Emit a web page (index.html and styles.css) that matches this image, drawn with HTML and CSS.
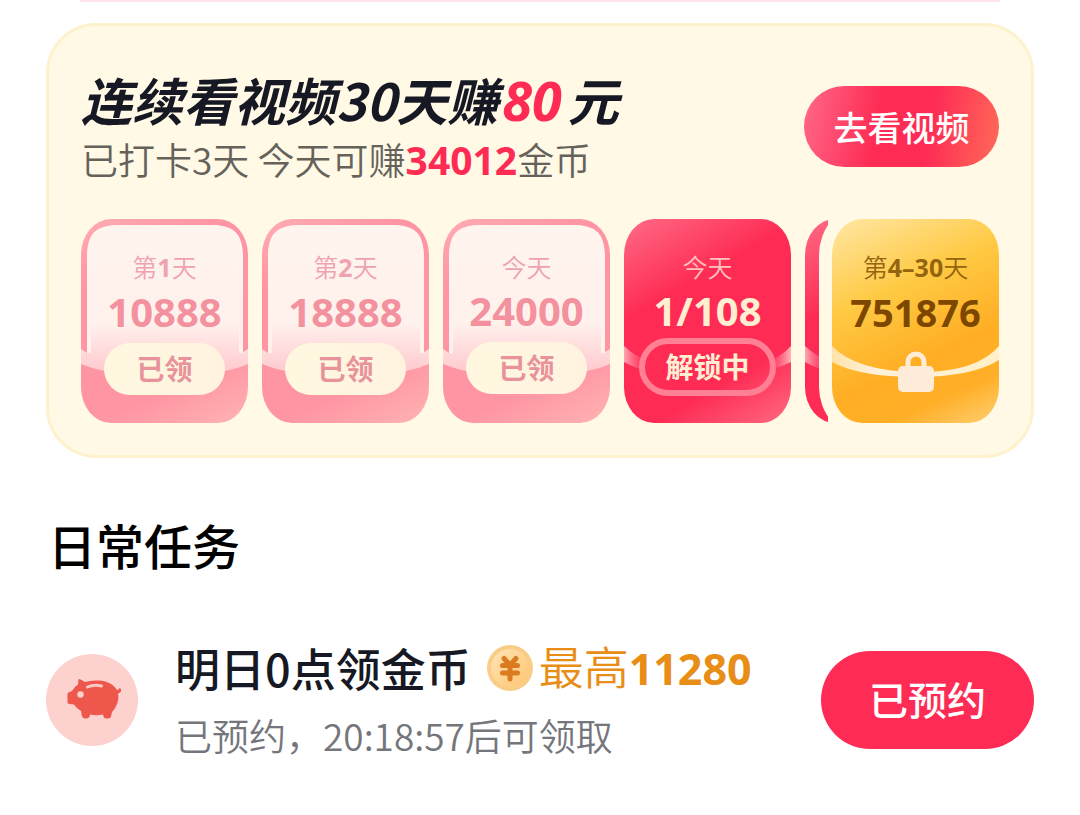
FILE: index.html
```html
<!DOCTYPE html>
<html lang="zh-CN">
<head>
<meta charset="utf-8">
<meta name="viewport" content="width=device-width, initial-scale=1">
<title>任务中心</title>
<link rel="stylesheet" href="styles.css">
</head>
<body>
<svg class="defs" width="0" height="0" aria-hidden="true">
  <defs>
    <linearGradient id="panel" x1="0" y1="0" x2="0" y2="1">
      <stop offset="0" stop-color="#fff4ee"/><stop offset=".65" stop-color="#fff1ec"/><stop offset="1" stop-color="#ffc6cc"/>
    </linearGradient>
    <linearGradient id="side" x1="0" y1="0" x2="0" y2="1">
      <stop offset="0" stop-color="#fff4ee"/><stop offset="1" stop-color="#fff1ec"/>
    </linearGradient>
    <linearGradient id="band" x1="0" y1="0" x2="1" y2="0">
      <stop offset="0" stop-color="#ffa5b2"/><stop offset=".14" stop-color="#ff5b79" stop-opacity="0"/><stop offset=".86" stop-color="#ff5b79" stop-opacity="0"/><stop offset="1" stop-color="#ffb3b8"/>
    </linearGradient>
    <linearGradient id="goldband" x1="0" y1="0" x2="1" y2="0">
      <stop offset="0" stop-color="#ffe3a8"/><stop offset=".25" stop-color="#fff0da"/><stop offset="1" stop-color="#fff0c8"/>
    </linearGradient>
    <linearGradient id="coin" x1="0" y1="0" x2="1" y2="1">
      <stop offset="0" stop-color="#ffe5b8"/><stop offset="1" stop-color="#ffc46f"/>
    </linearGradient>
    <symbol id="claimed" viewBox="0 0 167 204" preserveAspectRatio="none">
      <path fill="url(#panel)" d="M6 40C6 14 14 6 40 6H128C154 6 162 14 162 40V133L167 130V145Q140 157 84 157T0 145V130L6 134Z"/>
      <path fill="none" stroke="url(#side)" stroke-width="4" d="M8 134V42C8 16 16 8 40 8H128C152 8 160 16 160 42V134"/>
    </symbol>
    <symbol id="swoosh" viewBox="0 0 167 204" preserveAspectRatio="none">
      <path fill="url(#band)" d="M0 127Q26 152 84 153T167 127V143Q140 157 84 158T0 143Z"/>
    </symbol>
  </defs>
</svg>

<div class="page">
  <div class="previous"></div>

  <section class="card">
    <header class="card-head">
      <div class="card-copy">
        <h1 class="card-title">连续看视频30天赚<em class="yuan">80</em>元</h1>
        <p class="card-sub">已打卡3天 今天可赚<strong class="coins">34012</strong>金币</p>
      </div>
      <button class="watch" type="button">去看视频</button>
    </header>

    <div class="days">
      <ul class="track">
        <li class="tile claimed">
          <svg class="tile-art" aria-hidden="true"><use href="#claimed"/></svg>
          <span class="day">第<b>1</b>天</span><span class="amount">10888</span><span class="pill">已领</span>
        </li>
        <li class="tile claimed">
          <svg class="tile-art" aria-hidden="true"><use href="#claimed"/></svg>
          <span class="day">第<b>2</b>天</span><span class="amount">18888</span><span class="pill">已领</span>
        </li>
        <li class="tile claimed">
          <svg class="tile-art" aria-hidden="true"><use href="#claimed"/></svg>
          <span class="day">今天</span><span class="amount">24000</span><span class="pill">已领</span>
        </li>
        <li class="tile active">
          <svg class="tile-art" aria-hidden="true"><use href="#swoosh"/></svg>
          <span class="day">今天</span><span class="amount">1/108</span><span class="pill">解锁中</span>
        </li>
        <li class="tile active">
          <svg class="tile-art" aria-hidden="true"><use href="#swoosh"/></svg>
        </li>
      </ul>
      <div class="tile gold">
        <svg class="tile-art" viewBox="0 0 167 204" preserveAspectRatio="none" aria-hidden="true">
          <path fill="url(#goldband)" d="M0 127Q24 152 84 153T167 127V141Q140 158 84 158T0 143Z"/>
          <rect x="66" y="147" width="36" height="26" rx="5" fill="#ffecd8"/>
          <path fill="none" stroke="#ffecd8" stroke-width="5" d="M76 149V143A8 8 0 0 1 92 143V149"/>
        </svg>
        <span class="day">第<b>4–30</b>天</span><span class="amount">751876</span>
      </div>
    </div>
  </section>

  <h2 class="section-title">日常任务</h2>

  <section class="task">
    <svg class="task-icon" viewBox="0 0 92 92" aria-hidden="true">
      <circle cx="46" cy="46" r="46" fill="#fdd1cd"/>
      <path fill="#ee574c" d="M32.500 25.500Q33 24.500 34.500 25.500L39 28Q45 26 53 26.500C62 27 68 31 71 36Q72.500 36 73 34.500Q74 34 75 35C75.500 38 74 39 72 39.500C73.500 47 70 54 66 58L65 62.500Q64.500 64.500 62 64.500H60Q58 64.500 57.500 62.500L57 60.500Q50 62 44 60.500L43.500 62.500Q43 64.500 40.500 64.500H39Q36.500 64.500 36 62L35 57Q30 54 28 50.500L23 50Q21.500 49.500 21.500 48V40Q21.500 38.500 23.500 38L26 37Q28 33 32 30.500Z"/>
      <circle cx="34.500" cy="40.500" r="3.200" fill="#fdd1cd"/>
      <path fill="none" stroke="#fbc9c4" stroke-width="3" stroke-linecap="round" d="M41.500 33Q48 30 55.500 32"/>
    </svg>
    <div class="task-copy">
      <h3 class="task-title">明日0点领金币
        <svg class="coin" viewBox="0 0 46 46" aria-hidden="true">
          <circle cx="23" cy="23" r="23" fill="#f9cd86"/>
          <circle cx="23" cy="23" r="19" fill="url(#coin)"/>
          <path fill="none" stroke="#db7b20" stroke-width="5" stroke-linecap="round" stroke-linejoin="round" d="M17 13.500L23 20L29 13.500M23 20V34M15.500 20.500H30.500M15.500 28H30.500"/>
        </svg>
        <span class="reward">最高<b>11280</b></span>
      </h3>
      <p class="task-sub">已预约，20:18:57后可领取</p>
    </div>
    <button class="booked" type="button">已预约</button>
  </section>
</div>
</body>
</html>
```
FILE: styles.css
```css
* {
  box-sizing: border-box;
}

body {
  margin: 0;
  background: #fff;
  color: #161823;
  font-family: "Noto Sans CJK SC", sans-serif;
}

h1, h2, h3, p, ul {
  margin: 0;
  padding: 0;
}

button {
  flex: none;
  border: 0;
  border-radius: 50px;
  color: #fff;
  font-family: inherit;
  font-weight: 500;
}

.defs {
  position: absolute;
}

.page {
  padding: 0 46px;
}

.previous {
  height: 2px;
  margin: 0 34px 21px;
  background: #ffe3ec;
}

.card {
  padding: 40px 32px 32px;
  border: 3px solid #fdf2cd;
  border-radius: 50px;
  background: #fff9e5;
}

.card-head {
  display: flex;
  justify-content: space-between;
  align-items: flex-start;
}

.card-title {
  font-size: 51px;
  font-weight: 700;
  font-style: italic;
  line-height: 66px;
  white-space: nowrap;
}

.yuan {
  margin: 0 6px 0 4px;
  color: #fe2c55;
  font-family: "Noto Sans", sans-serif;
  font-size: 54px;
  line-height: 1;
}

.card-sub {
  color: #65625b;
  font-size: 37px;
  font-weight: 350;
  line-height: 54px;
  white-space: nowrap;
}

.coins {
  color: #fe2c55;
  font-family: "Noto Sans", sans-serif;
  font-size: 39px;
  font-weight: 700;
  line-height: 1;
}

.watch {
  width: 195px;
  height: 81px;
  margin-top: 20px;
  background: linear-gradient(100deg, #ff6888 0%, #fe2c55 38%, #fe2c55 64%, #ff6b58 100%);
  font-size: 34px;
}

.days {
  display: flex;
  gap: 4px;
  margin-top: 33px;
}

.track {
  display: flex;
  flex: 1;
  gap: 14px;
  min-width: 0;
  overflow: hidden;
  list-style: none;
}

.tile {
  position: relative;
  display: flex;
  flex: none;
  flex-direction: column;
  align-items: center;
  width: 167px;
  height: 204px;
  padding-top: 29px;
  border-radius: 30px / 36px;
}

.tile-art {
  position: absolute;
  inset: 0;
  width: 100%;
  height: 100%;
}

.day,
.amount,
.pill {
  position: relative;
  white-space: nowrap;
}

.day {
  font-size: 25px;
  font-weight: 350;
  line-height: 36px;
}

.day b,
.amount {
  font-family: "Noto Sans", sans-serif;
  font-weight: 700;
}

.amount {
  font-size: 40px;
  line-height: 54px;
}

.pill {
  display: flex;
  justify-content: center;
  align-items: center;
  border-radius: 30px;
  font-size: 28px;
  font-weight: 700;
  line-height: 36px;
  padding-bottom: 2px;
}

.claimed {
  background: linear-gradient(155deg, #ffacb4 0%, #ff94a4 25%, #ff95a3 75%, #ffb4b2 100%);
  color: #f3919f;
}

.claimed .day {
  color: #efa3b0;
}

.claimed .pill {
  width: 121px;
  height: 52px;
  margin-top: 4px;
  background: linear-gradient(90deg, #fff8df, #fff3e0);
  color: #e8929b;
}

.active {
  overflow: hidden;
  background: linear-gradient(150deg, #ff6b85 0%, #fe2c55 34%, #fe2c55 74%, #ff6a82 100%);
  color: #ffeed2;
}

.active .day {
  color: #ffc0bf;
}

.active .pill {
  width: 137px;
  height: 58px;
  border: 6px solid #ff7f94;
}

.gold {
  background: linear-gradient(155deg, #ffe7a4 0%, #ffc943 35%, #ffae24 65%, #ffaf27 82%, #ffcf72 100%);
  box-shadow: -1px 0 0 12px #fff9e5;
  color: #7d4700;
}

.gold .day {
  color: #94640f;
}

.gold .amount {
  font-size: 38px;
}

.section-title {
  margin-top: 51px;
  padding-left: 2px;
  color: #000;
  font-size: 48px;
  font-weight: 500;
  line-height: 70px;
}

.task {
  display: flex;
  align-items: center;
  margin-top: 54px;
}

.task-icon {
  flex: none;
  width: 92px;
  height: 92px;
}

.task-copy {
  flex: 1;
  min-width: 0;
  margin-left: 37px;
  padding-bottom: 4px;
}

.task-title {
  display: flex;
  align-items: center;
  font-size: 45px;
  font-weight: 500;
  line-height: 66px;
  white-space: nowrap;
}

.coin {
  flex: none;
  width: 46px;
  height: 46px;
  margin: 0 6px 0 16px;
}

.reward {
  color: #e88d16;
  font-weight: 350;
}

.reward b {
  font-family: "Noto Sans", sans-serif;
  font-size: 43px;
  font-weight: 700;
}

.task-sub {
  margin-top: 6px;
  color: #75767c;
  font-size: 37px;
  font-weight: 350;
  line-height: 54px;
  white-space: nowrap;
}

.booked {
  width: 213px;
  height: 98px;
  padding-bottom: 4px;
  background: #fe2c55;
  font-size: 39px;
}
```
